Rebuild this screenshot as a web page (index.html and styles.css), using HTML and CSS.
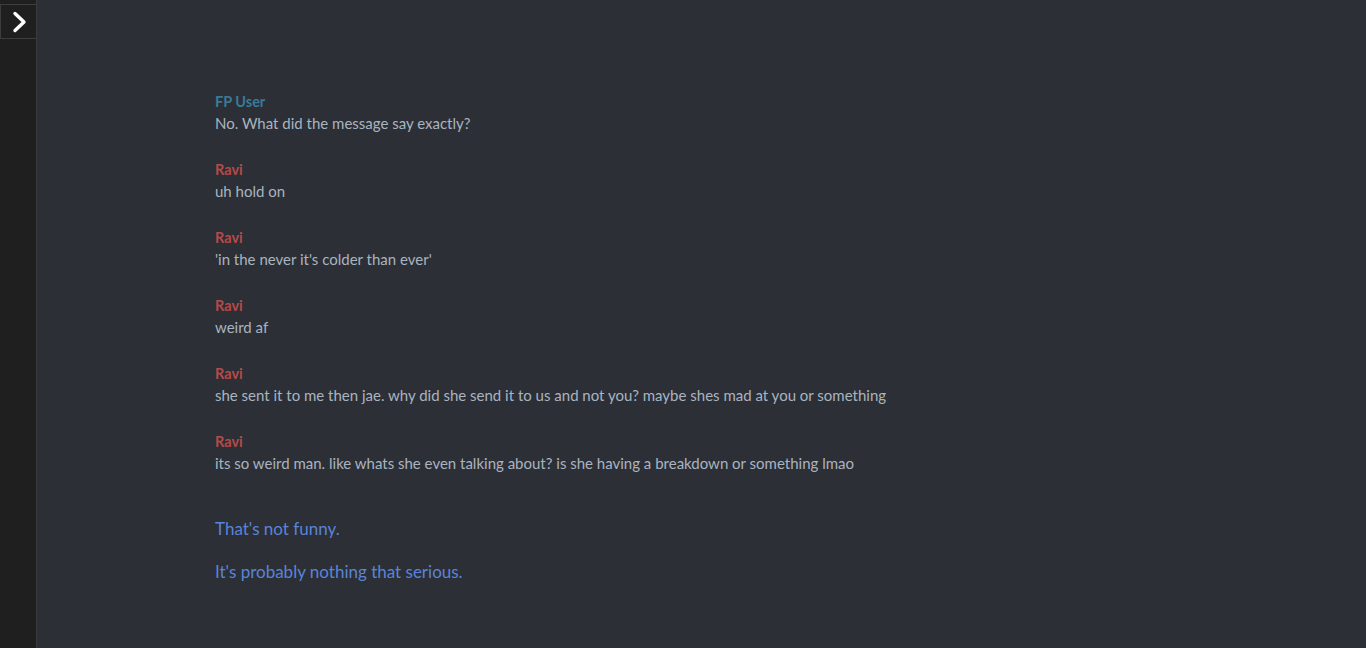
FILE: index.html
```html
<!DOCTYPE html>
<html>
<head>
<meta charset="utf-8">
<link rel="stylesheet" href="styles.css">
</head>
<body>
<div class="app">
  <aside class="sidebar">
    <button class="toggle" aria-label="Open">
      <svg width="20" height="24" viewBox="0 0 20 24"><path d="M6 3.5 L15 12 L6 20.5" fill="none" stroke="#ffffff" stroke-width="3.4" stroke-linecap="round" stroke-linejoin="round"/></svg>
    </button>
  </aside>
  <main class="chat">
    <div class="msg"><div class="name user">FP User</div><div class="text">No. What did the message say exactly?</div></div>
    <div class="msg"><div class="name ravi">Ravi</div><div class="text">uh hold on</div></div>
    <div class="msg"><div class="name ravi">Ravi</div><div class="text">'in the never it's colder than ever'</div></div>
    <div class="msg"><div class="name ravi">Ravi</div><div class="text">weird af</div></div>
    <div class="msg"><div class="name ravi">Ravi</div><div class="text">she sent it to me then jae. why did she send it to us and not you? maybe shes mad at you or something</div></div>
    <div class="msg"><div class="name ravi">Ravi</div><div class="text">its so weird man. like whats she even talking about? is she having a breakdown or something lmao</div></div>
    <div class="choices">
      <div class="choice">That's not funny.</div>
      <div class="choice">It's probably nothing that serious.</div>
    </div>
  </main>
</div>
</body>
</html>
```
FILE: styles.css
```css
html, body {
  margin: 0;
  padding: 0;
  height: 100%;
  background: #2c2f35;
}
body {
  font-family: Lato, "Noto Sans", sans-serif;
}
.app {
  display: flex;
  height: 648px;
}
.sidebar {
  width: 36px;
  flex: 0 0 36px;
  background: #1f1f1f;
  border-right: 1px solid #3a3a3a;
}
.toggle {
  display: flex;
  align-items: center;
  justify-content: center;
  width: 36px;
  height: 35px;
  padding: 0;
  margin: 4px 0 0 0;
  background: #1f1f1f;
  border: 1px solid #3d3d3d;
  border-right: none;
  box-sizing: border-box;
}
.chat {
  flex: 1;
  padding: 90px 0 0 178px;
}
.msg {
  margin-bottom: 24px;
}
.name {
  font-size: 14.5px;
  font-weight: 700;
  line-height: 23px;
}
.name.user { color: #3b7a99; }
.name.ravi { color: #b44b4b; }
.text {
  font-size: 15px;
  line-height: 21px;
  color: #a9b4c0;
}
.choices {
  padding-top: 19px;
  display: flex;
  flex-direction: column;
  gap: 19px;
}
.choice {
  font-size: 17px;
  line-height: 24px;
  color: #5a84d8;
}
```
